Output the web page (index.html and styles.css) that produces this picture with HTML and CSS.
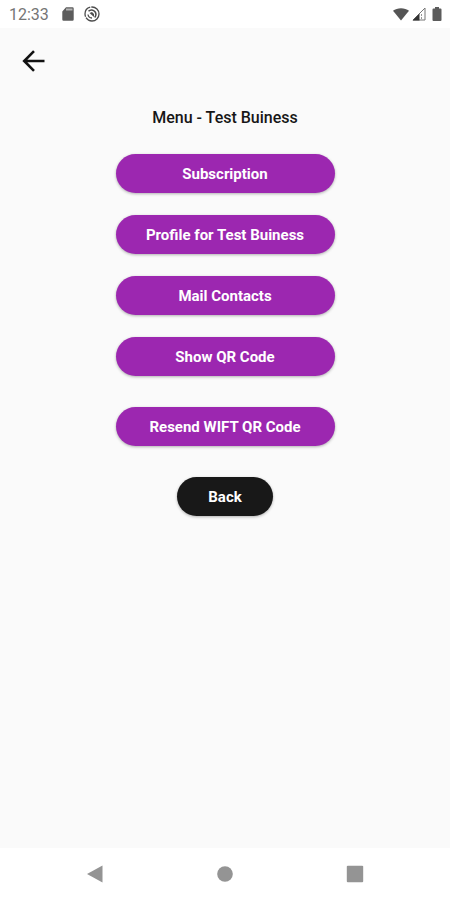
FILE: index.html
```
<!DOCTYPE html>
<html lang="en">
<head>
    <meta charset="UTF-8">
    <meta name="viewport" content="width=device-width, initial-scale=1.0">
    <title>Menu - Test Buiness</title>
    <link rel="stylesheet" href="styles.css">
</head>
<body>

<div class="status-bar">
    <div class="status-left">
        <span class="clock">12:33</span>
        <svg class="sd-icon" width="12" height="14" viewBox="0 0 12 14">
            <path d="M4 .300h6.500a1.200 1.200 0 0 1 1.200 1.200v11a1.200 1.200 0 0 1-1.200 1.200h-9a1.200 1.200 0 0 1-1.200-1.200V4.500z" fill="#5c5c5c"/>
            <path d="M4 2.500h6.500" stroke="#b4b4b4" stroke-width="2"/>
        </svg>
        <svg class="data-icon" width="16" height="16" viewBox="0 0 16 16" fill="none" stroke="#4c4c4c">
            <circle cx="8" cy="8" r="7" stroke-width="1.300" stroke-dasharray="18 1 12 1"/>
            <path d="M4.500 5.300c2-2 5-1.500 6.500.500s1 4-.300 5.700" stroke-width="1.500"/>
            <path d="M5.500 7l4.500 4V8L8 6z" fill="#4c4c4c" stroke="none"/>
            <path d="M4 8.500c.300 2 2 3.500 4 3.500" stroke-width="1.300"/>
        </svg>
    </div>
    <div class="status-right">
        <svg width="18" height="14" viewBox="0 0 18 14">
            <path d="M9 13.500L1 3.700C5 .300 13 .300 17 3.700z" fill="#555"/>
        </svg>
        <svg width="14" height="14" viewBox="0 0 14 14">
            <path d="M13 1v12H1z" fill="none" stroke="#777" stroke-width="1"/>
            <path d="M7.500 6.500v7H.500z" fill="#333"/>
            <path d="M9.500 7v5" stroke="#999" stroke-dasharray="2 1"/>
        </svg>
        <svg class="battery" width="10" height="14" viewBox="0 0 10 14">
            <path d="M3 0h4v1.500h1.500a1 1 0 0 1 1 1V13a1 1 0 0 1-1 1h-7a1 1 0 0 1-1-1V2.500a1 1 0 0 1 1-1H3z" fill="#5c5c5c"/>
        </svg>
    </div>
</div>

<header class="app-bar">
    <button class="icon-button" type="button" aria-label="Go back">
        <svg width="24" height="24" viewBox="0 0 24 24" fill="none" stroke="#111" stroke-width="2.600">
            <path d="M23.500 12H3.500M13 2.200L3.200 12l9.800 9.800"/>
        </svg>
    </button>
</header>

<main class="content">
    <h1 class="title">Menu - Test Buiness</h1>
    <div class="menu">
        <button class="button" type="button">Subscription</button>
        <button class="button" type="button">Profile for Test Buiness</button>
        <button class="button" type="button">Mail Contacts</button>
        <button class="button" type="button">Show QR Code</button>
    </div>
    <button class="button" type="button">Resend WIFT QR Code</button>
    <button class="button back" type="button">Back</button>
</main>

<nav class="nav-bar">
    <button class="nav-button" type="button" aria-label="Back">
        <svg width="18" height="18" viewBox="0 0 18 18"><path d="M16.500 .500v17L1 9z" fill="#949494"/></svg>
    </button>
    <button class="nav-button" type="button" aria-label="Home">
        <svg width="18" height="18" viewBox="0 0 18 18"><circle cx="9" cy="9" r="7.800" fill="#949494"/></svg>
    </button>
    <button class="nav-button" type="button" aria-label="Recent apps">
        <svg width="18" height="18" viewBox="0 0 18 18"><rect x=".800" y=".800" width="16.400" height="16.400" rx="1" fill="#949494"/></svg>
    </button>
</nav>

</body>
</html>
```

FILE: styles.css
```
* {
    box-sizing: border-box;
}

body {
    margin: 0;
    min-height: 100vh;
    display: flex;
    flex-direction: column;
    background-color: #fafafa;
    font-family: Roboto, "Liberation Sans", sans-serif;
    color: #161616;
}

button {
    border: none;
    font-family: inherit;
    cursor: pointer;
}

svg {
    display: block;
}

.status-bar {
    display: flex;
    justify-content: space-between;
    align-items: center;
    height: 28px;
    padding: 0 8px 0 9px;
    background-color: #fff;
}

.status-left,
.status-right {
    display: flex;
    align-items: center;
}

.clock {
    font-size: 16px;
    color: #757575;
}

.sd-icon {
    margin-left: 13px;
}

.data-icon {
    margin-left: 10px;
}

.status-right {
    gap: 2px;
}

.battery {
    margin-left: 4px;
}

.app-bar {
    padding: 13px;
}

.icon-button {
    padding: 8px;
    background: none;
}

.content {
    flex: 1;
    display: flex;
    flex-direction: column;
    align-items: center;
    gap: 31px;
    padding: 14px 16px;
}

.title {
    margin: 0 0 -5px;
    font-size: 16px;
    line-height: 20px;
    font-weight: 500;
}

.menu {
    display: flex;
    flex-direction: column;
    gap: 22px;
}

.button {
    width: 219px;
    padding: 11px 16px 9px;
    border-radius: 20px;
    background-color: #9c27b0;
    color: #fff;
    font-size: 15px;
    line-height: 19px;
    font-weight: 700;
    box-shadow: 0 1px 3px rgba(0, 0, 0, 0.3);
}

.button.back {
    width: 96px;
    background-color: #181818;
}

.nav-bar {
    display: flex;
    justify-content: space-around;
    align-items: center;
    height: 52px;
    padding: 0 30px;
    background-color: #fff;
}

.nav-button {
    padding: 8px;
    background: none;
}
```
